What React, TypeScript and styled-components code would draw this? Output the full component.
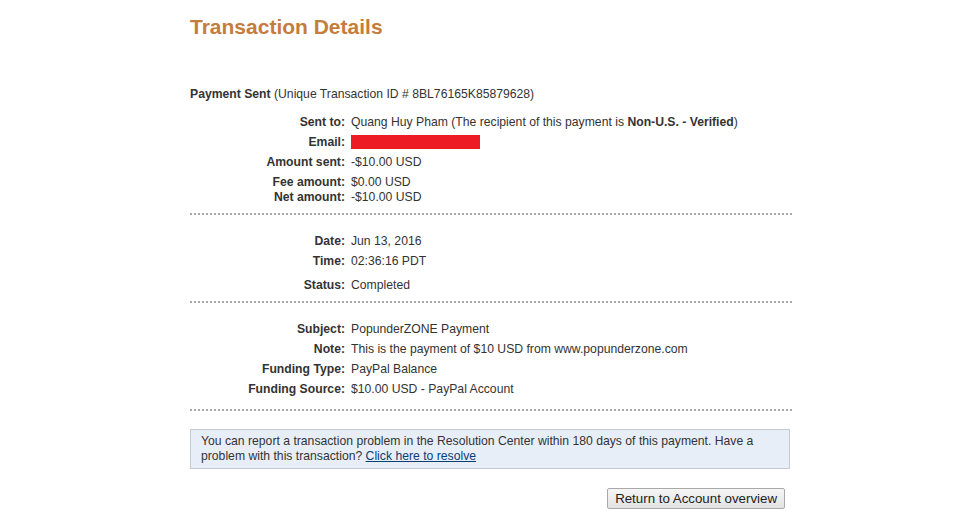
import React from "react";
import styled, { createGlobalStyle } from "styled-components";

const Global = createGlobalStyle`
  html, body { margin: 0; padding: 0; background: #fff; }
  body { font-family: "Liberation Sans", Arial, sans-serif; font-size: 12.2px; color: #333; }
`;

const Page = styled.div`
  width: 602px;
  margin-left: 190px;
  padding-top: 14px;
`;

const Title = styled.h1`
  margin: 0;
  font-size: 21px;
  line-height: 26px;
  font-weight: bold;
  color: #c57c3d;
`;

const Heading = styled.div`
  margin-top: 47px;
  line-height: 15px;
`;

const Strong = styled.b`
  font-weight: bold;
`;

const Section = styled.div<{ $pt: number; $pb: number }>`
  display: grid;
  grid-template-columns: 155px 1fr;
  column-gap: 6px;
  padding: ${(p) => p.$pt}px 0 ${(p) => p.$pb}px;
  border-bottom: 2px dotted #a8a8a8;
`;

const Label = styled.div<{ $h: number }>`
  text-align: right;
  font-weight: bold;
  height: ${(p) => p.$h}px;
  line-height: 15px;
`;

const Value = styled.div<{ $h: number }>`
  height: ${(p) => p.$h}px;
  line-height: 15px;
`;

const Redacted = styled.span`
  display: inline-block;
  width: 129px;
  height: 14px;
  background: #ed1c24;
  vertical-align: top;
`;

const Notice = styled.div`
  margin-top: 18px;
  width: 578px;
  padding: 4px 10px 4px;
  background: #e8eef7;
  border: 1px solid #c3cbd3;
  line-height: 15px;
`;

const Link = styled.a`
  color: #0b3c74;
  text-decoration: underline;
  line-height: 15px;
`;

const Actions = styled.div`
  display: flex;
  justify-content: flex-end;
  padding-right: 7px;
  margin-top: 19px;
`;

const Button = styled.button`
  font-family: "Liberation Sans", Arial, sans-serif;
  font-size: 13.3px;
  color: #222;
  height: 21px;
  padding: 0 7px;
  background: linear-gradient(#f6f6f6, #e2e2e2);
  border: 1px solid #a9a9a9;
  border-radius: 2px;
`;

type Row = { label: string; value: React.ReactNode; h: number };

const sec1: Row[] = [
  {
    label: "Sent to:",
    value: (
      <>
        Quang Huy Pham (The recipient of this payment is <Strong>Non-U.S. - Verified</Strong>)
      </>
    ),
    h: 20,
  },
  { label: "Email:", value: <Redacted />, h: 20 },
  { label: "Amount sent:", value: "-$10.00 USD", h: 20 },
  { label: "Fee amount:", value: "$0.00 USD", h: 15 },
  { label: "Net amount:", value: "-$10.00 USD", h: 15 },
];

const sec2: Row[] = [
  { label: "Date:", value: "Jun 13, 2016", h: 20 },
  { label: "Time:", value: "02:36:16 PDT", h: 24 },
  { label: "Status:", value: "Completed", h: 15 },
];

const sec3: Row[] = [
  { label: "Subject:", value: "PopunderZONE Payment", h: 20 },
  { label: "Note:", value: "This is the payment of $10 USD from www.popunderzone.com", h: 20 },
  { label: "Funding Type:", value: "PayPal Balance", h: 20 },
  { label: "Funding Source:", value: "$10.00 USD - PayPal Account", h: 15 },
];

const Rows = ({ rows }: { rows: Row[] }) => (
  <>
    {rows.map((r) => (
      <React.Fragment key={r.label}>
        <Label $h={r.h}>{r.label}</Label>
        <Value $h={r.h}>{r.value}</Value>
      </React.Fragment>
    ))}
  </>
);

export default function App() {
  return (
    <>
      <Global />
      <Page>
        <Title>Transaction Details</Title>
        <Heading>
          <Strong>Payment Sent</Strong> (Unique Transaction ID # 8BL76165K85879628)
        </Heading>
        <Section $pt={13} $pb={8}>
          <Rows rows={sec1} />
        </Section>
        <Section $pt={19} $pb={8}>
          <Rows rows={sec2} />
        </Section>
        <Section $pt={19} $pb={12}>
          <Rows rows={sec3} />
        </Section>
        <Notice>
          You can report a transaction problem in the Resolution Center within 180 days of this payment. Have a
          problem with this transaction? <Link href="#">Click here to resolve</Link>
        </Notice>
        <Actions>
          <Button>Return to Account overview</Button>
        </Actions>
      </Page>
    </>
  );
}
